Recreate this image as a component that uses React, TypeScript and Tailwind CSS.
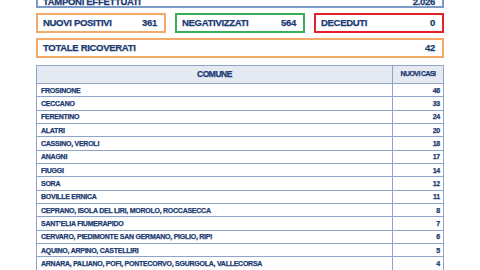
const rows: [string, number][] = [
  ['FROSINONE', 46],
  ['CECCANO', 33],
  ['FERENTINO', 24],
  ['ALATRI', 20],
  ['CASSINO, VEROLI', 18],
  ['ANAGNI', 17],
  ['FIUGGI', 14],
  ['SORA', 12],
  ['BOVILLE ERNICA', 11],
  ['CEPRANO, ISOLA DEL LIRI, MOROLO, ROCCASECCA', 8],
  ['SANT’ELIA FIUMERAPIDO', 7],
  ['CERVARO, PIEDIMONTE SAN GERMANO, PIGLIO, RIPI', 6],
  ['AQUINO, ARPINO, CASTELLIRI', 5],
  ['ARNARA, PALIANO, POFI, PONTECORVO, SGURGOLA, VALLECORSA', 4],
  ['ALVITO, ARCE, ATINA, CASTRO DEI VOLSCI', 3],
];

const StatBox = ({ label, value, color }: { label: string; value: string; color: string }) => (
  <div className={`flex h-[20px] items-center justify-between border-2 pl-[5px] pr-[7px] ${color}`}>
    <span>{label}</span>
    <span>{value}</span>
  </div>
);

export default function App() {
  return (
    <div
      className="h-[270px] w-[480px] overflow-hidden bg-white text-[#1b3a72] [-webkit-text-stroke:0.25px_#1b3a72]"
      style={{ fontFamily: '"Liberation Sans", Arial, sans-serif' }}
    >
      <div className="mx-[36px] flex flex-col font-bold">
        <div className="-mt-[12px] flex h-[20px] items-end justify-between border-2 border-[#7d9bc9] pl-[5px] pr-[7px] text-[9.5px] leading-[9px] tracking-[-0.3px]">
          <span>TAMPONI EFFETTUATI</span>
          <span>2.026</span>
        </div>
        <div className="mt-[5px] grid grid-cols-3 gap-[9px] text-[9.5px] tracking-[-0.3px]">
          <StatBox label="NUOVI POSITIVI" value="361" color="border-[#f3aa68]" />
          <StatBox label="NEGATIVIZZATI" value="564" color="border-[#3aad5c]" />
          <StatBox label="DECEDUTI" value="0" color="border-[#e5202a]" />
        </div>
        <div className="mt-[5px] text-[9.5px] tracking-[-0.3px]">
          <StatBox label="TOTALE RICOVERATI" value="42" color="border-[#f3aa68]" />
        </div>
        <table className="mt-[7px] w-full border-collapse border border-[#8ea5c9] text-[7px] tracking-[-0.25px]">
          <thead>
            <tr className="h-[18px] bg-[#e4e9f2]">
              <th className="border border-[#8ea5c9] text-center text-[8.5px] tracking-[-0.5px]">COMUNE</th>
              <th className="w-[51px] border border-[#8ea5c9] text-center text-[7px] tracking-[-0.6px]">NUOVI CASI</th>
            </tr>
          </thead>
          <tbody>
            {rows.map(([name, n]) => (
              <tr key={name} className="h-[13.33px]">
                <td className="border border-[#8ea5c9] px-[4px] leading-none">{name}</td>
                <td className="border border-[#8ea5c9] px-[3px] text-right leading-none">{n}</td>
              </tr>
            ))}
          </tbody>
        </table>
      </div>
    </div>
  );
}
